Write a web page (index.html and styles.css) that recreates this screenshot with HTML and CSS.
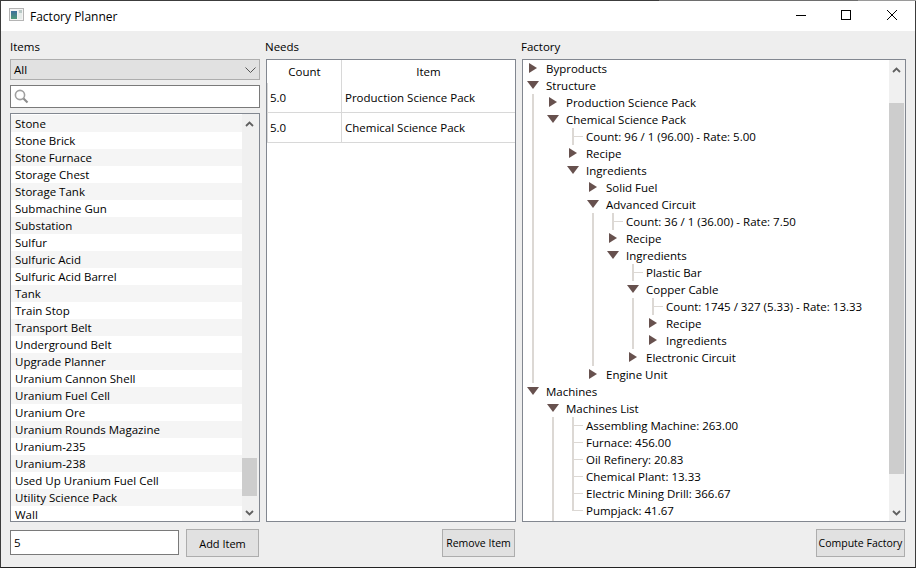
FILE: index.html
```html
<!DOCTYPE html>
<html lang="en">
<head>
  <meta charset="UTF-8">
  <title>Factory Planner</title>
  <link rel="stylesheet" href="styles.css">
</head>
<body>
<div class="window">
  <div class="topline"></div>

  <!-- title bar -->
  <div class="titlebar">
    <svg class="app-icon" width="16" height="16" viewBox="0 0 16 16">
      <defs>
        <linearGradient id="iconFill" x1="0" y1="0" x2="0" y2="1">
          <stop offset="0" stop-color="#3c6f9c"/>
          <stop offset="1" stop-color="#4f9a78"/>
        </linearGradient>
      </defs>
      <rect x="0.5" y="0.500" width="14" height="12" fill="#f4f4f4" stroke="#b4b4b4"/>
      <rect x="2" y="3" width="6" height="8" fill="url(#iconFill)"/>
      <rect x="9" y="2" width="4" height="9" fill="#e6ecea"/>
      <rect x="10" y="2" width="3" height="3" fill="#b9c9c6"/>
    </svg>
    <span class="title">Factory Planner</span>
    <div class="win-buttons">
      <svg width="46" height="30" viewBox="0 0 46 30"><path d="M19 14.500h10" stroke="#000" fill="none"/></svg>
      <svg width="46" height="30" viewBox="0 0 46 30"><rect x="18.500" y="9.500" width="9" height="9" stroke="#000" fill="none"/></svg>
      <svg width="46" height="30" viewBox="0 0 46 30"><path d="M18 9l10 10M28 9l-10 10" stroke="#000" fill="none"/></svg>
    </div>
  </div>

  <div class="main">

    <!-- items column -->
    <section class="col col-items">
      <div class="label">Items</div>
      <div class="combo">
        <span>All</span>
        <svg width="11" height="6" viewBox="0 0 11 6"><path d="M0.500 0.500l5 5 5-5" stroke="#555" fill="none"/></svg>
      </div>
      <div class="search">
        <svg width="15" height="15" viewBox="0 0 15 15"><circle cx="6" cy="6" r="4.600" stroke="#a0a0a0" stroke-width="1.600" fill="none"/><path d="M9.500 9.500l4 4" stroke="#8c8c8c" stroke-width="2.200"/></svg>
      </div>
      <div class="list-box">
        <ul class="item-list">
          <li>Stone</li>
          <li>Stone Brick</li>
          <li>Stone Furnace</li>
          <li>Storage Chest</li>
          <li>Storage Tank</li>
          <li>Submachine Gun</li>
          <li>Substation</li>
          <li>Sulfur</li>
          <li>Sulfuric Acid</li>
          <li>Sulfuric Acid Barrel</li>
          <li>Tank</li>
          <li>Train Stop</li>
          <li>Transport Belt</li>
          <li>Underground Belt</li>
          <li>Upgrade Planner</li>
          <li>Uranium Cannon Shell</li>
          <li>Uranium Fuel Cell</li>
          <li>Uranium Ore</li>
          <li>Uranium Rounds Magazine</li>
          <li>Uranium-235</li>
          <li>Uranium-238</li>
          <li>Used Up Uranium Fuel Cell</li>
          <li>Utility Science Pack</li>
          <li>Wall</li>
        </ul>
        <div class="scrollbar">
          <svg class="sb-arrow" width="9" height="6" viewBox="0 0 9 6"><path d="M1 5l3.500-3.500 3.500 3.500" stroke="#606060" stroke-width="1.800" fill="none"/></svg>
          <div class="sb-track sb-track-items"><div class="sb-thumb"></div></div>
          <svg class="sb-arrow" width="9" height="6" viewBox="0 0 9 6"><path d="M1 1l3.500 3.500 3.500-3.500" stroke="#606060" stroke-width="1.800" fill="none"/></svg>
        </div>
      </div>
      <div class="actions">
        <input class="count-input" type="text" value="5">
        <button class="btn btn-add">Add Item</button>
      </div>
    </section>

    <!-- needs column -->
    <section class="col col-needs">
      <div class="label">Needs</div>
      <div class="table-box">
        <div class="needs-row needs-head">
          <div class="cell-count">Count</div>
          <div class="cell-item">Item</div>
        </div>
        <div class="needs-row">
          <div class="cell-count">5.0</div>
          <div class="cell-item">Production Science Pack</div>
        </div>
        <div class="needs-row">
          <div class="cell-count">5.0</div>
          <div class="cell-item">Chemical Science Pack</div>
        </div>
      </div>
      <div class="actions actions-end">
        <button class="btn btn-remove">Remove Item</button>
      </div>
    </section>

    <!-- factory column -->
    <section class="col col-factory">
      <div class="label">Factory</div>
      <div class="tree-box">
        <div class="tree">
          <div class="row"><i class="right"></i><span>Byproducts</span></div>
          <div class="row"><i class="down"></i><span>Structure</span></div>
          <div class="row"><i class="v"></i><i class="right"></i><span>Production Science Pack</span></div>
          <div class="row"><i class="v"></i><i class="down"></i><span>Chemical Science Pack</span></div>
          <div class="row"><i class="v"></i><i></i><i class="tee"></i><span>Count: 96 / 1 (96.00) - Rate: 5.00</span></div>
          <div class="row"><i class="v"></i><i></i><i class="right"></i><span>Recipe</span></div>
          <div class="row"><i class="v"></i><i></i><i class="down"></i><span>Ingredients</span></div>
          <div class="row"><i class="v"></i><i></i><i></i><i class="right"></i><span>Solid Fuel</span></div>
          <div class="row"><i class="v"></i><i></i><i></i><i class="down"></i><span>Advanced Circuit</span></div>
          <div class="row"><i class="v"></i><i></i><i></i><i class="v"></i><i class="tee"></i><span>Count: 36 / 1 (36.00) - Rate: 7.50</span></div>
          <div class="row"><i class="v"></i><i></i><i></i><i class="v"></i><i class="right"></i><span>Recipe</span></div>
          <div class="row"><i class="v"></i><i></i><i></i><i class="v"></i><i class="down"></i><span>Ingredients</span></div>
          <div class="row"><i class="v"></i><i></i><i></i><i class="v"></i><i></i><i class="tee"></i><span>Plastic Bar</span></div>
          <div class="row"><i class="v"></i><i></i><i></i><i class="v"></i><i></i><i class="down"></i><span>Copper Cable</span></div>
          <div class="row"><i class="v"></i><i></i><i></i><i class="v"></i><i></i><i class="v"></i><i class="tee"></i><span>Count: 1745 / 327 (5.33) - Rate: 13.33</span></div>
          <div class="row"><i class="v"></i><i></i><i></i><i class="v"></i><i></i><i class="v"></i><i class="right"></i><span>Recipe</span></div>
          <div class="row"><i class="v"></i><i></i><i></i><i class="v"></i><i></i><i class="v"></i><i class="right"></i><span>Ingredients</span></div>
          <div class="row"><i class="v"></i><i></i><i></i><i class="v"></i><i></i><i class="right"></i><span>Electronic Circuit</span></div>
          <div class="row"><i class="v"></i><i></i><i></i><i class="right"></i><span>Engine Unit</span></div>
          <div class="row"><i class="down"></i><span>Machines</span></div>
          <div class="row"><i></i><i class="down"></i><span>Machines List</span></div>
          <div class="row"><i></i><i class="v"></i><i class="tee"></i><span>Assembling Machine: 263.00</span></div>
          <div class="row"><i></i><i class="v"></i><i class="tee"></i><span>Furnace: 456.00</span></div>
          <div class="row"><i></i><i class="v"></i><i class="tee"></i><span>Oil Refinery: 20.83</span></div>
          <div class="row"><i></i><i class="v"></i><i class="tee"></i><span>Chemical Plant: 13.33</span></div>
          <div class="row"><i></i><i class="v"></i><i class="tee"></i><span>Electric Mining Drill: 366.67</span></div>
          <div class="row"><i></i><i class="v"></i><i class="elbow"></i><span>Pumpjack: 41.67</span></div>
          <div class="row"><i></i><i class="v"></i></div>
        </div>
        <div class="scrollbar scrollbar-tree">
          <svg class="sb-arrow" width="9" height="6" viewBox="0 0 9 6"><path d="M1 5l3.500-3.500 3.500 3.500" stroke="#606060" stroke-width="1.800" fill="none"/></svg>
          <div class="sb-track sb-track-tree"><div class="sb-thumb"></div></div>
          <svg class="sb-arrow" width="9" height="6" viewBox="0 0 9 6"><path d="M1 1l3.500 3.500 3.500-3.500" stroke="#606060" stroke-width="1.800" fill="none"/></svg>
        </div>
      </div>
      <div class="actions actions-end">
        <button class="btn btn-compute">Compute Factory</button>
      </div>
    </section>

  </div>
</div>
</body>
</html>
```

FILE: styles.css
```css
html, body {
  margin: 0;
  height: 100%;
  overflow: hidden;
}

body {
  font-family: "Open Sans", "Noto Sans", sans-serif;
  font-size: 11.5px;
  color: #000;
  background: #f0f0f0;
}

.window {
  box-sizing: border-box;
  width: 916px;
  height: 568px;
  border: 1px solid #3c3c3c;
  border-top: none;
  border-bottom-color: #222;
  display: flex;
  flex-direction: column;
  background: #eeeeee;
}

.topline {
  height: 1px;
  flex: none;
  margin: 0 -1px;
  background: linear-gradient(to right, #3c3c3c 659px, #6e6e6e 659px, #6e6e6e 858px, #9a9a9a 858px);
}

.titlebar {
  height: 30px;
  flex: none;
  background: #fff;
  display: flex;
  align-items: center;
  padding-left: 8px;
}

.app-icon {
  margin-right: 5px;
}

.title {
  font-size: 12px;
}

.win-buttons {
  margin-left: auto;
  display: flex;
}

.win-buttons svg {
  display: block;
}

.main {
  flex: 1;
  display: flex;
  gap: 6px;
  padding: 0 9px 10px 9px;
  min-height: 0;
}

.col {
  display: flex;
  flex-direction: column;
  width: 250px;
}

.col-factory {
  width: 384px;
}

.label {
  height: 28px;
  line-height: 31px;
  flex: none;
}

.col-needs .label,
.col-factory .label {
  margin-left: -1px;
}

/* left column */
.combo {
  box-sizing: border-box;
  height: 21px;
  flex: none;
  border: 1px solid #adadad;
  background: #e1e1e1;
  display: flex;
  align-items: center;
  justify-content: space-between;
  padding: 0 3px 0 3px;
}

.search {
  box-sizing: border-box;
  height: 23px;
  flex: none;
  margin-top: 5px;
  border: 1px solid #7a7a7a;
  background: #fff;
  display: flex;
  align-items: center;
  padding-left: 3px;
}

.list-box {
  flex: none;
  box-sizing: border-box;
  height: 409px;
  margin-top: 5px;
  border: 1px solid #828790;
  background: #fff;
  display: flex;
  overflow: hidden;
}

.item-list {
  list-style: none;
  margin: 0;
  padding: 1px 0 0 0;
  flex: 1;
  overflow: hidden;
}

.item-list li {
  height: 17px;
  line-height: 17px;
  padding-left: 4px;
}

.item-list li:nth-child(odd) {
  background: #f5f5f5;
}

.scrollbar {
  width: 17px;
  flex: none;
  background: #f0f0f0;
  display: flex;
  flex-direction: column;
  align-items: center;
  padding: 7px 2px 5px 0;
  box-sizing: border-box;
}

.scrollbar-tree {
  width: 16px;
  padding-right: 1px;
}

.sb-arrow {
  flex: none;
}

.sb-track {
  flex: 1;
  width: 15px;
  margin: 5px 0;
  position: relative;
}

.sb-thumb {
  position: absolute;
  left: 0;
  right: 0;
  background: #cdcdcd;
}

.sb-track-items .sb-thumb {
  top: 326px;
  height: 38px;
}

.sb-track-tree .sb-thumb {
  top: 25px;
  height: 371px;
}

.actions {
  flex: 1;
  display: flex;
  align-items: flex-start;
  padding-top: 7px;
}

.actions-end {
  justify-content: flex-end;
}

.count-input {
  box-sizing: border-box;
  width: 169px;
  height: 25px;
  margin: 1px 7px 0 0;
  border: 1px solid #7a7a7a;
  padding: 0 3px;
  font: inherit;
  background: #fff;
  outline: none;
}

.btn {
  box-sizing: border-box;
  height: 28px;
  border: 1px solid #adadad;
  background: #e1e1e1;
  font: inherit;
  font-size: 11px;
  padding: 0;
  color: #000;
  white-space: nowrap;
}

.btn-add {
  width: 73px;
}

.btn-remove {
  width: 73px;
  margin-right: 1px;
  font-size: 10.500px;
}

.btn-compute {
  width: 89px;
  margin-right: 1px;
  font-size: 10.500px;
}

/* needs table */
.table-box {
  flex: none;
  box-sizing: border-box;
  height: 463px;
  border: 1px solid #828790;
  background: #fff;
}

.needs-row {
  display: flex;
  height: 30px;
  line-height: 29px;
  border-bottom: 1px solid #d8d8d8;
  box-sizing: border-box;
  margin-left: 1px;
  box-shadow: -1px 0 0 #d8d8d8;
}

.needs-head {
  height: 23px;
  line-height: 24px;
  border-bottom: none;
  box-shadow: none;
  text-align: center;
}

.cell-count {
  box-sizing: border-box;
  width: 74px;
  padding-left: 2px;
  border-right: 1px solid #d8d8d8;
}

.cell-item {
  flex: 1;
  padding-left: 3px;
}

.needs-head .cell-count,
.needs-head .cell-item {
  padding-left: 0;
}

/* factory tree */
.tree-box {
  flex: none;
  box-sizing: border-box;
  height: 463px;
  border: 1px solid #828790;
  background: #fff;
  display: flex;
  overflow: hidden;
}

.tree {
  flex: 1;
  overflow: hidden;
}

.row {
  display: flex;
  height: 17px;
  line-height: 17px;
  white-space: nowrap;
}

.row i {
  display: block;
  position: relative;
  flex: none;
  width: 20px;
  height: 17px;
}

.row span {
  margin-left: 3px;
}

/* guide lines */
.row i.v::before,
.row i.tee::before,
.row i.elbow::before {
  content: "";
  position: absolute;
  left: 9px;
  top: 0;
  bottom: 0;
  width: 2px;
  background: #dcd8d4;
}

.row i.elbow::before {
  bottom: 8px;
}

.row i.tee::after,
.row i.elbow::after {
  content: "";
  position: absolute;
  left: 11px;
  top: 8px;
  width: 9px;
  height: 1px;
  background: #dcd8d4;
}

/* expand arrows */
.row i.right::before {
  content: "";
  position: absolute;
  left: 6px;
  top: 3px;
  border-left: 8px solid #67514e;
  border-top: 5.500px solid transparent;
  border-bottom: 5.500px solid transparent;
}

.row i.down::before {
  content: "";
  position: absolute;
  left: 4px;
  top: 4px;
  border-top: 8px solid #67514e;
  border-left: 6px solid transparent;
  border-right: 6px solid transparent;
}
```
